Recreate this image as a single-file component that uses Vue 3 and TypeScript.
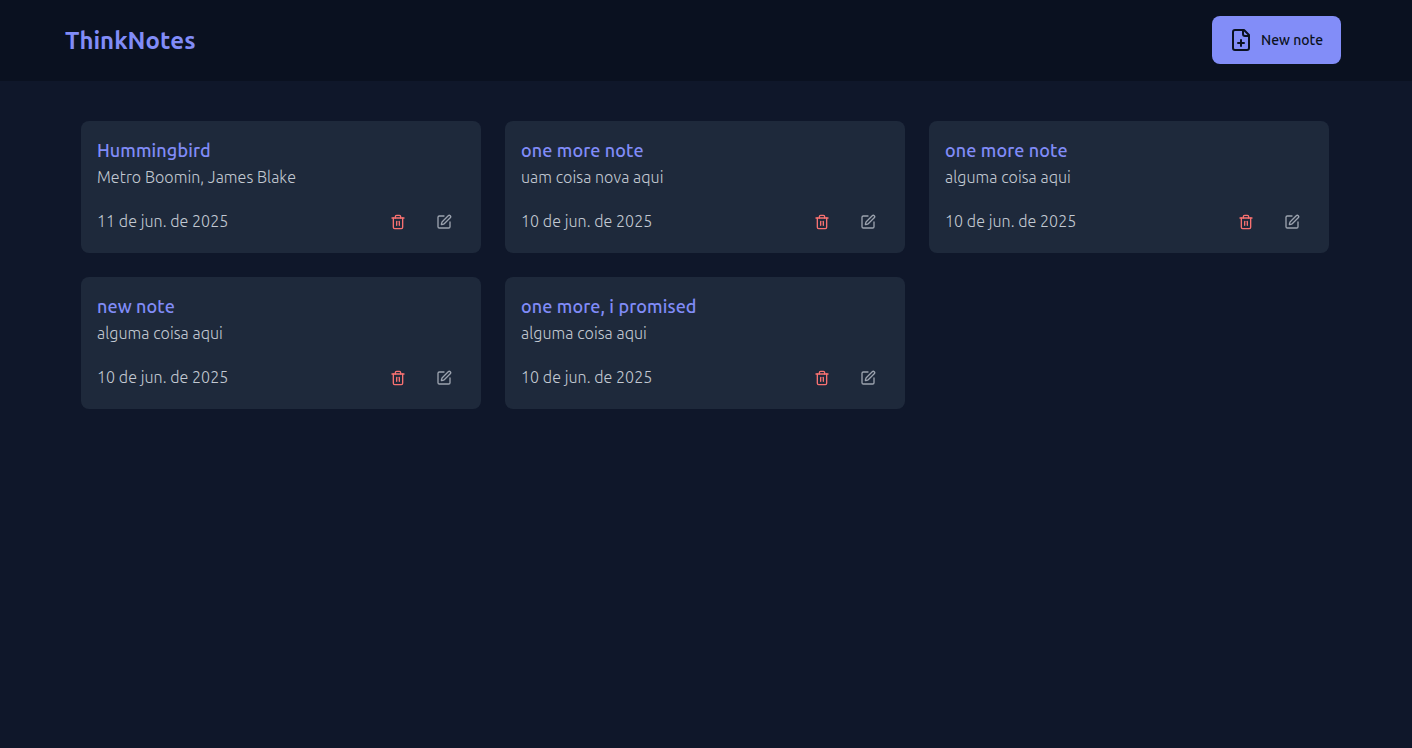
<script setup lang="ts">
interface Note {
  title: string;
  body: string;
  date: string;
}
const notes: Note[] = [
  { title: "Hummingbird", body: "Metro Boomin, James Blake", date: "11 de jun. de 2025" },
  { title: "one more note", body: "uam coisa nova aqui", date: "10 de jun. de 2025" },
  { title: "one more note", body: "alguma coisa aqui", date: "10 de jun. de 2025" },
  { title: "new note", body: "alguma coisa aqui", date: "10 de jun. de 2025" },
  { title: "one more, i promised", body: "alguma coisa aqui", date: "10 de jun. de 2025" },
];
</script>

<template>
  <div class="page">
    <header class="header">
      <div class="header-inner">
        <h1 class="brand">ThinkNotes</h1>
        <button class="new-btn" type="button">
          <svg width="24" height="24" viewBox="0 0 24 24" fill="none" stroke="currentColor" stroke-width="2" stroke-linecap="round" stroke-linejoin="round">
            <path d="M15 2H6a2 2 0 0 0-2 2v16a2 2 0 0 0 2 2h12a2 2 0 0 0 2-2V7Z" />
            <path d="M14 2v4a2 2 0 0 0 2 2h4" />
            <path d="M9 15h6" />
            <path d="M12 18v-6" />
          </svg>
          <span>New note</span>
        </button>
      </div>
    </header>
    <main class="grid">
      <article v-for="(n, i) in notes" :key="i" class="card">
        <h2 class="title">{{ n.title }}</h2>
        <p class="body">{{ n.body }}</p>
        <div class="foot">
          <span class="date">{{ n.date }}</span>
          <div class="actions">
            <span class="icon trash">
              <svg width="16" height="16" viewBox="0 0 24 24" fill="none" stroke="currentColor" stroke-width="2" stroke-linecap="round" stroke-linejoin="round">
                <path d="M3 6h18" />
                <path d="M19 6v14c0 1-1 2-2 2H7c-1 0-2-1-2-2V6" />
                <path d="M8 6V4c0-1 1-2 2-2h4c1 0 2 1 2 2v2" />
                <line x1="10" x2="10" y1="11" y2="17" />
                <line x1="14" x2="14" y1="11" y2="17" />
              </svg>
            </span>
            <span class="icon pen">
              <svg width="16" height="16" viewBox="0 0 24 24" fill="none" stroke="currentColor" stroke-width="2" stroke-linecap="round" stroke-linejoin="round">
                <path d="M12 3H5a2 2 0 0 0-2 2v14a2 2 0 0 0 2 2h14a2 2 0 0 0 2-2v-7" />
                <path d="M18.375 2.625a1 1 0 0 1 3 3l-9.013 9.014a2 2 0 0 1-.853.505l-2.873.84a.5.5 0 0 1-.62-.62l.84-2.873a2 2 0 0 1 .506-.852z" />
              </svg>
            </span>
          </div>
        </div>
      </article>
    </main>
  </div>
</template>

<style>
html, body { margin: 0; background: #0f172a; }
</style>

<style scoped>
.page {
  min-height: 748px;
  background: #0f172a;
  font-family: Ubuntu, "Noto Sans", "Open Sans", sans-serif;
  font-kerning: none;
}
.header {
  height: 81px;
  box-sizing: border-box;
  background: #0a1120;
  padding-right: 6px;
}
.header-inner {
  width: 1276px;
  height: 80px;
  margin: 0 auto;
  display: flex;
  align-items: center;
  justify-content: space-between;
}
.brand {
  margin: 0;
  font-size: 24px;
  font-weight: 600;
  color: #818cf8;
}
.new-btn {
  width: 129px;
  height: 48px;
  border: none;
  border-radius: 8px;
  background: #828df8;
  color: #0a1120;
  display: flex;
  align-items: center;
  justify-content: flex-start;
  gap: 8px;
  font: 500 14px Ubuntu, "Noto Sans", sans-serif;
  font-kerning: none;
  padding: 0 0 0 17px;
}
.grid {
  width: 1248px;
  margin-left: 81px;
  padding-top: 40px;
  display: grid;
  grid-template-columns: repeat(3, 400px);
  gap: 24px;
}
.card {
  height: 132px;
  box-sizing: border-box;
  background: #1e293b;
  border-radius: 8px;
  padding: 16px;
  display: flex;
  flex-direction: column;
}
.title {
  margin: -1px 0 1px;
  font-size: 18px;
  line-height: 28px;
  font-weight: 500;
  color: #818cf8;
  letter-spacing: 0.1px;
}
.body {
  margin: 0;
  font-size: 16px;
  line-height: 24px;
  font-weight: 300;
  color: #c3c9d3;
  letter-spacing: 0.05px;
}
.foot {
  margin-top: 16px;
  height: 32px;
  display: flex;
  align-items: center;
  justify-content: space-between;
}
.date {
  font-size: 16px;
  font-weight: 300;
  color: #c3c9d3;
  letter-spacing: 0.05px;
}
.actions {
  display: flex;
  gap: 14px;
  padding: 2px 5px 0 0;
}
.icon {
  width: 32px;
  height: 32px;
  display: flex;
  align-items: center;
  justify-content: center;
}
.trash { color: #f87171; }
.pen { color: #9ca3af; }
</style>
